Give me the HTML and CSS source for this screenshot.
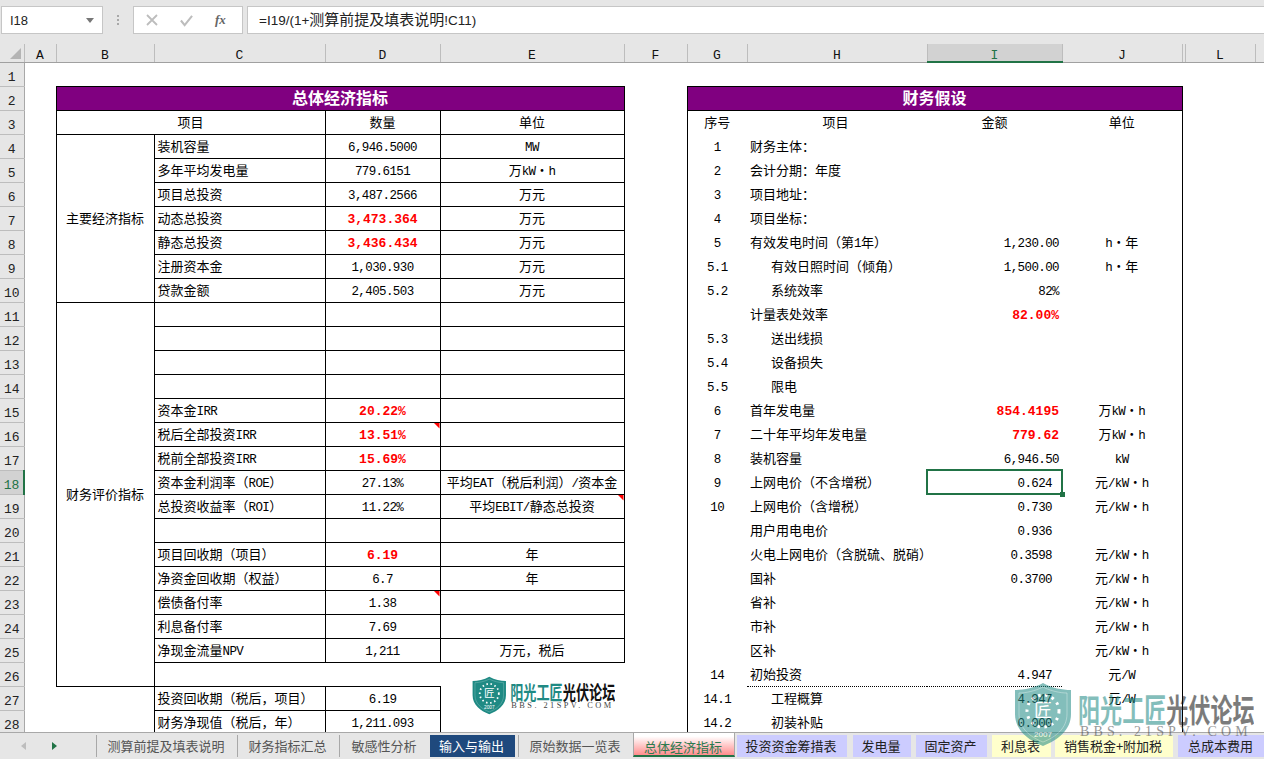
FILE: index.html
```html
<!DOCTYPE html>
<html lang="zh-CN">
<head>
<meta charset="utf-8">
<title>总体经济指标</title>
<link rel="stylesheet" href="styles.css">
</head>
<body>
<svg class="defs" width="0" height="0" aria-hidden="true">
  <symbol id="brand" viewBox="0 0 240 65">
    <path d="M29 1C38 6 48 8 57 8V32C57 48 44 58 29 64C14 58 1 48 1 32V8C10 8 20 6 29 1Z" fill="#1f8a84"/>
    <path d="M29 5C37 9 46 11 53 11V32C53 46 42 55 29 60C16 55 5 46 5 32V11C12 11 21 9 29 5Z" fill="none" stroke="#fff" stroke-opacity=".35"/>
    <circle cx="29" cy="29" r="16" fill="none" stroke="#fff" stroke-width="3" stroke-dasharray="2.5 4.5"/>
    <text x="29" y="35" text-anchor="middle" font-size="18" fill="#fff" font-family="Noto Sans CJK SC">匠</text>
    <text x="29" y="55" text-anchor="middle" font-size="8" fill="#fff" font-family="Liberation Sans">2007</text>
    <g transform="translate(64 40) scale(.69 1)" font-family="Noto Sans CJK SC" font-weight="700" font-size="32">
      <text x="0" y="0" fill="#1f8a84">阳光工匠</text>
      <text x="128" y="0" fill="#111">光伏论坛</text>
    </g>
    <text x="66" y="54" font-size="14" letter-spacing="4.1" fill="#444" font-family="Liberation Serif">BBS. 21SPV. COM</text>
  </symbol>
</svg>
<div class="app">
  <header class="bar">
    <div class="namebox"><span>I18</span><span class="caret"></span></div>
    <div class="grip"><i></i><i></i><i></i></div>
    <div class="fnbox">
      <svg class="ic" width="12" height="12" viewBox="0 0 12 12"><path d="M1 1L11 11M11 1L1 11" stroke="#bdbdbd" stroke-width="1.8" fill="none"/></svg>
      <svg class="ic" width="15" height="13" viewBox="0 0 16 14"><path d="M2 7L6 12L14 2" stroke="#bdbdbd" stroke-width="2.2" fill="none"/></svg>
      <span class="fx">fx</span>
    </div>
    <div class="formula">=I19/(1+<span class="fcjk">测算前提及填表说明</span>!C11)</div>
  </header>
  <main class="sheet">
    <table class="grid">
      <colgroup>
        <col class="w-h"><col class="w-a"><col class="w-b"><col class="w-c"><col class="w-d"><col class="w-e"><col class="w-f"><col class="w-g"><col class="w-hh"><col class="w-i"><col class="w-j"><col class="w-k"><col class="w-l"><col class="w-m">
      </colgroup>
      <thead>
        <tr class="heads">
          <th class="corner"></th><th>A</th><th>B</th><th>C</th><th>D</th><th>E</th><th>F</th><th>G</th><th>H</th><th class="on">I</th><th>J</th><th></th><th>L</th><th></th>
        </tr>
      </thead>
      <tbody>
        <tr><th>1</th><td colspan="13"></td></tr>
        <tr><th>2</th><td></td><td colspan="4" class="title">总体经济指标</td><td></td><td colspan="4" class="title">财务假设</td></tr>
        <tr><th>3</th><td></td><td colspan="2" class="x c">项目</td><td class="x c">数量</td><td class="x c">单位</td><td></td><td class="g zh">序号</td><td class="h c">项目</td><td class="i c">金额</td><td class="j">单位</td></tr>
        <tr><th>4</th><td></td><td rowspan="7" class="x c">主要经济指标</td><td class="x">装机容量</td><td class="x c n">6,946.5000</td><td class="x c n">MW</td><td></td><td class="g">1</td><td class="h">财务主体&#xFF1A;</td><td class="i"></td><td class="j"></td></tr>
        <tr><th>5</th><td></td><td class="x">多年平均发电量</td><td class="x c n">779.6151</td><td class="x c">万<span class="n">kW</span>・<span class="n">h</span></td><td></td><td class="g">2</td><td class="h">会计分期&#xFF1A;年度</td><td class="i"></td><td class="j"></td></tr>
        <tr><th>6</th><td></td><td class="x">项目总投资</td><td class="x c n">3,487.2566</td><td class="x c">万元</td><td></td><td class="g">3</td><td class="h">项目地址&#xFF1A;</td><td class="i"></td><td class="j"></td></tr>
        <tr><th>7</th><td></td><td class="x">动态总投资</td><td class="x c red">3,473.364</td><td class="x c">万元</td><td></td><td class="g">4</td><td class="h">项目坐标&#xFF1A;</td><td class="i"></td><td class="j"></td></tr>
        <tr><th>8</th><td></td><td class="x">静态总投资</td><td class="x c red">3,436.434</td><td class="x c">万元</td><td></td><td class="g">5</td><td class="h">有效发电时间&#xFF08;第<span class="n">1</span>年&#xFF09;</td><td class="i n">1,230.00</td><td class="j"><span class="n">h</span>・年</td></tr>
        <tr><th>9</th><td></td><td class="x">注册资本金</td><td class="x c n">1,030.930</td><td class="x c">万元</td><td></td><td class="g">5.1</td><td class="h ind">有效日照时间&#xFF08;倾角&#xFF09;</td><td class="i n">1,500.00</td><td class="j"><span class="n">h</span>・年</td></tr>
        <tr><th>10</th><td></td><td class="x">贷款金额</td><td class="x c n">2,405.503</td><td class="x c">万元</td><td></td><td class="g">5.2</td><td class="h ind">系统效率</td><td class="i n">82%</td><td class="j"></td></tr>
        <tr><th>11</th><td></td><td rowspan="16" class="x c">财务评价指标</td><td class="x"></td><td class="x"></td><td class="x"></td><td></td><td class="g"></td><td class="h">计量表处效率</td><td class="i red">82.00%</td><td class="j"></td></tr>
        <tr><th>12</th><td></td><td class="x"></td><td class="x"></td><td class="x"></td><td></td><td class="g">5.3</td><td class="h ind">送出线损</td><td class="i"></td><td class="j"></td></tr>
        <tr><th>13</th><td></td><td class="x"></td><td class="x"></td><td class="x"></td><td></td><td class="g">5.4</td><td class="h ind">设备损失</td><td class="i"></td><td class="j"></td></tr>
        <tr><th>14</th><td></td><td class="x"></td><td class="x"></td><td class="x"></td><td></td><td class="g">5.5</td><td class="h ind">限电</td><td class="i"></td><td class="j"></td></tr>
        <tr><th>15</th><td></td><td class="x">资本金<span class="n">IRR</span></td><td class="x c red">20.22%</td><td class="x"></td><td></td><td class="g">6</td><td class="h">首年发电量</td><td class="i red">854.4195</td><td class="j">万<span class="n">kW</span>・<span class="n">h</span></td></tr>
        <tr><th>16</th><td></td><td class="x">税后全部投资<span class="n">IRR</span></td><td class="x c red note">13.51%</td><td class="x"></td><td></td><td class="g">7</td><td class="h">二十年平均年发电量</td><td class="i red">779.62</td><td class="j">万<span class="n">kW</span>・<span class="n">h</span></td></tr>
        <tr><th>17</th><td></td><td class="x">税前全部投资<span class="n">IRR</span></td><td class="x c red">15.69%</td><td class="x"></td><td></td><td class="g">8</td><td class="h">装机容量</td><td class="i n">6,946.50</td><td class="j n">kW</td></tr>
        <tr><th class="on">18</th><td></td><td class="x">资本金利润率&#xFF08;<span class="n">ROE</span>&#xFF09;</td><td class="x c n">27.13%</td><td class="x c">平均<span class="n">EAT</span>&#xFF08;税后利润&#xFF09;<span class="n">/</span>资本金</td><td></td><td class="g">9</td><td class="h">上网电价&#xFF08;不含增税&#xFF09;</td><td class="i n pad sel">0.624</td><td class="j">元<span class="n">/kW</span>・<span class="n">h</span></td></tr>
        <tr><th>19</th><td></td><td class="x">总投资收益率&#xFF08;<span class="n">ROI</span>&#xFF09;</td><td class="x c n">11.22%</td><td class="x c note">平均<span class="n">EBIT/</span>静态总投资</td><td></td><td class="g">10</td><td class="h">上网电价&#xFF08;含增税&#xFF09;</td><td class="i n pad">0.730</td><td class="j">元<span class="n">/kW</span>・<span class="n">h</span></td></tr>
        <tr><th>20</th><td></td><td class="x"></td><td class="x"></td><td class="x"></td><td></td><td class="g"></td><td class="h">用户用电电价</td><td class="i n pad">0.936</td><td class="j"></td></tr>
        <tr><th>21</th><td></td><td class="x">项目回收期&#xFF08;项目&#xFF09;</td><td class="x c red">6.19</td><td class="x c">年</td><td></td><td class="g"></td><td class="h">火电上网电价&#xFF08;含脱硫、脱硝&#xFF09;</td><td class="i n pad">0.3598</td><td class="j">元<span class="n">/kW</span>・<span class="n">h</span></td></tr>
        <tr><th>22</th><td></td><td class="x">净资金回收期&#xFF08;权益&#xFF09;</td><td class="x c n">6.7</td><td class="x c">年</td><td></td><td class="g"></td><td class="h">国补</td><td class="i n pad">0.3700</td><td class="j">元<span class="n">/kW</span>・<span class="n">h</span></td></tr>
        <tr><th>23</th><td></td><td class="x">偿债备付率</td><td class="x c n note">1.38</td><td class="x"></td><td></td><td class="g"></td><td class="h">省补</td><td class="i"></td><td class="j">元<span class="n">/kW</span>・<span class="n">h</span></td></tr>
        <tr><th>24</th><td></td><td class="x">利息备付率</td><td class="x c n">7.69</td><td class="x"></td><td></td><td class="g"></td><td class="h">市补</td><td class="i"></td><td class="j">元<span class="n">/kW</span>・<span class="n">h</span></td></tr>
        <tr><th>25</th><td></td><td class="x">净现金流量<span class="n">NPV</span></td><td class="x c n">1,211</td><td class="x c">万元&#xFF0C;税后</td><td></td><td class="g"></td><td class="h">区补</td><td class="i"></td><td class="j">元<span class="n">/kW</span>・<span class="n">h</span></td></tr>
        <tr><th>26</th><td></td><td colspan="3" class="lead"></td><td></td><td class="g">14</td><td class="h dot">初始投资</td><td class="i n pad dot">4.947</td><td class="j">元<span class="n">/W</span></td></tr>
        <tr><th>27</th><td colspan="2"></td><td class="x">投资回收期&#xFF08;税后&#xFF0C;项目&#xFF09;</td><td class="x c n">6.19</td><td></td><td></td><td class="g">14.1</td><td class="h ind">工程概算</td><td class="i n pad">4.947</td><td class="j">元<span class="n">/W</span></td></tr>
        <tr><th>28</th><td colspan="2"></td><td class="x">财务净现值&#xFF08;税后&#xFF0C;年&#xFF09;</td><td class="x c n">1,211.093</td><td></td><td></td><td class="g">14.2</td><td class="h ind">初装补贴</td><td class="i n pad">0.000</td><td class="j"></td></tr>
      </tbody>
    </table>
    <svg class="logo" width="143" height="39" role="img" aria-label="阳光工匠光伏论坛"><use href="#brand"/></svg>
  </main>
  <nav class="tabs">
    <div class="arrows"><span class="prev"></span><span class="next"></span></div>
    <a class="tab t1">测算前提及填表说明</a>
    <a class="tab t2">财务指标汇总</a>
    <a class="tab t3">敏感性分析</a>
    <a class="tab blue">输入与输出</a>
    <a class="tab t5">原始数据一览表</a>
    <a class="tab active">总体经济指标</a>
    <a class="tab lav t7">投资资金筹措表</a>
    <a class="tab lav t8">发电量</a>
    <a class="tab lav t9">固定资产</a>
    <a class="tab yel t10">利息表</a>
    <a class="tab yel t11">销售税金+附加税</a>
    <a class="tab lav t12">总成本费用</a>
  </nav>
  <svg class="mark" width="240" height="65" aria-hidden="true"><use href="#brand"/></svg>
</div>
</body>
</html>
```
FILE: styles.css
```css
* { box-sizing: border-box; }
html, body { margin: 0; height: 100%; overflow: hidden; }
body { font-family: "Liberation Mono", "Noto Sans CJK SC", monospace; font-size: 13px; color: #000; background: #fff; }
.defs { position: absolute; }
.app { position: relative; display: flex; flex-direction: column; height: 759px; overflow: hidden; }

/* formula bar */
.bar { flex: 0 0 44px; display: flex; align-items: flex-start; padding: 6px 0 0 1px; background: #e6e6e6; }
.namebox { width: 102px; height: 28px; display: flex; align-items: center; justify-content: space-between; padding: 0 8px; background: #fff; border: 1px solid #c6c6c6; font: 13px "Liberation Sans", sans-serif; color: #222; }
.caret { width: 0; height: 0; border: 4px solid transparent; border-top: 5px solid #777; border-bottom: 0; }
.grip { width: 30px; height: 28px; display: flex; flex-direction: column; align-items: center; justify-content: center; gap: 2px; }
.grip i { width: 2px; height: 2px; background: #a8a8a8; }
.fnbox { width: 110px; height: 28px; display: flex; align-items: center; gap: 21px; padding-left: 12px; background: #fff; border: 1px solid #c6c6c6; }
.fx { font: italic bold 13px "Liberation Serif", serif; color: #666; }
.formula { flex: 1; height: 28px; margin-left: 4px; padding-left: 11px; background: #fff; border: 1px solid #c6c6c6; border-right: 0; font: 13.5px/26px "Liberation Sans", "Noto Sans CJK SC", sans-serif; color: #222; white-space: nowrap; }
.fcjk { font-size: 15px; }

/* grid */
.sheet { flex: 1; position: relative; overflow: hidden; background: #fff; }
.grid { table-layout: fixed; border-collapse: collapse; width: 1264px; }
.w-h { width: 24px; } .w-a { width: 32px; } .w-b { width: 98px; } .w-c { width: 171px; } .w-d { width: 115px; } .w-e { width: 184px; } .w-f { width: 63px; } .w-g { width: 60px; } .w-hh { width: 180px; } .w-i { width: 135px; } .w-j { width: 120px; } .w-k { width: 3px; } .w-l { width: 70px; } .w-m { width: 9px; }
tr { height: 24px; }
td { padding: 4px 3px 0; white-space: nowrap; overflow: visible; line-height: 18px; }
.n { font-size: 12.5px; letter-spacing: -.6px; }
tbody th { padding: 7px 0 0; background: #e6e6e6; border-right: 1px solid #a8a8a8; border-bottom: 1px solid #bdbdbd; font: 13px/14px "Liberation Mono", monospace; color: #222; }
tbody th.on { background: #d2d2d2; color: #217346; border-right: 2px solid #217346; }
.heads { height: 18px; }
.heads th { padding: 6px 0 0; background: #e6e6e6; border-right: 1px solid #bdbdbd; border-bottom: 1px solid #a0a0a0; font: 13px/11px "Liberation Mono", monospace; color: #111; }
.heads th.on { background: #d2d2d2; color: #217346; border-bottom: 2px solid #217346; }
.corner { position: relative; }
.corner::after { content: ""; position: absolute; left: 10px; top: 4px; width: 11px; height: 11px; background: #b4b4b4; clip-path: polygon(100% 0, 100% 100%, 0 100%); }

td.title { padding: 0 0 3px; background: #800080; border: 1px solid #000; color: #fff; text-align: center; font: 700 16px/20px "Noto Sans CJK SC", sans-serif; }
.x { border: 1px solid #000; }
.c { text-align: center; }
.red { color: #f00; font-weight: 700; font-size: 13px; }
.lead { border-left: 1px solid #000; }
.g { border-left: 1px solid #000; text-align: center; font-size: 12.5px; letter-spacing: -.6px; }
.g.zh { font-size: 13px; letter-spacing: 0; }
.h.c { padding-left: 0; }
.ind { padding-left: 24px; }
.i { text-align: right; }
.i.c { text-align: center; }
.pad { padding-right: 10px; }
.j { border-right: 1px solid #000; text-align: center; }
.dot { border-bottom: 1px dotted #000; }

.note, .sel { position: relative; }
.note::after { content: ""; position: absolute; right: 0; top: 0; width: 6px; height: 6px; background: #f00; clip-path: polygon(0 0, 100% 0, 100% 100%); }
.sel::after { content: ""; position: absolute; inset: -1px; border: 2px solid #217346; pointer-events: none; }
.sel::before { content: ""; position: absolute; right: -3px; bottom: -3px; width: 5px; height: 5px; background: #217346; z-index: 1; }

.logo { position: absolute; left: 472px; top: 632px; }

/* sheet tabs */
.tabs { flex: 0 0 27px; display: flex; align-items: flex-start; background: #e6e6e6; border-top: 1px solid #a8a8a8; font: 13px/22px "Noto Sans CJK SC", sans-serif; color: #555; overflow: hidden; }
.arrows { position: relative; width: 96px; height: 26px; flex: none; }
.prev, .next { position: absolute; top: 9px; width: 0; height: 0; border: 4px solid transparent; }
.prev { left: 21px; border-right: 5px solid #bdbdbd; border-left: 0; }
.next { left: 52px; border-left: 5px solid #217346; border-right: 0; }
.tab { flex: none; height: 22px; margin-top: 2px; padding-right: 2px; text-align: center; white-space: nowrap; border-left: 1px solid #a8a8a8; }
.t1 { width: 141px; } .t2 { width: 102px; } .t3 { width: 91px; } .t5 { width: 115px; margin-left: 3px; }
.blue { width: 85px; border-left: 0; background: #1f497d; color: #fff; }
.active { width: 102px; height: 25px; margin-top: -1px; padding-top: 3px; border: 1px solid #a8a8a8; border-bottom: 2px solid #217346; background: linear-gradient(#fff 15%, #ff8d8d); color: #2d7a50; }
.lav { background: #ccf; color: #222; border-left: 0; }
.yel { background: #ffc; color: #222; border-left: 0; }
.t7 { width: 110px; margin-left: 2px; } .t8 { width: 58px; margin-left: 6px; } .t9 { width: 71px; margin-left: 5px; }
.t10 { width: 59px; margin-left: 5px; } .t11 { width: 118px; margin-left: 4px; } .t12 { width: 87px; margin-left: 5px; }

.mark { position: absolute; left: 1014px; top: 682px; opacity: .55; pointer-events: none; }
```
